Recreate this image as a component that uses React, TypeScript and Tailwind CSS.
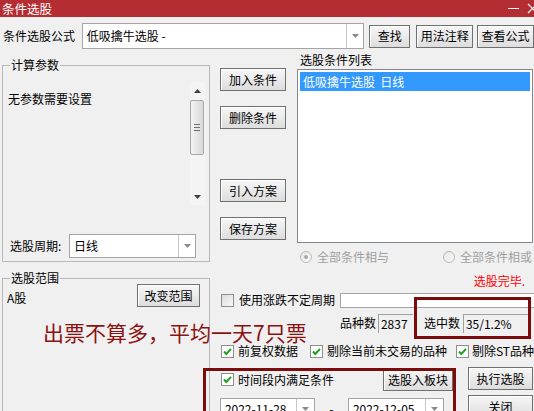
import React from 'react';

const Btn = ({ label, className = '' }: { label: string; className?: string }) => (
  <button
    className={`flex items-center justify-center border border-[#707070] bg-gradient-to-b from-[#f7f7f7] to-[#dddddd] text-[12px] leading-none text-black shadow-[inset_1px_1px_0_#ffffff] ${className}`}
  >
    {label}
  </button>
);

const Combo = ({ value, className = '', arrow = 'w-[17px]' }: { value: string; className?: string; arrow?: string }) => (
  <div className={`flex border border-[#a5a5a5] bg-white ${className}`}>
    <div className="flex flex-1 items-center overflow-hidden whitespace-nowrap pl-[4px]">{value}</div>
    <div className={`flex items-center justify-center border-l border-[#c8c8c8] ${arrow}`}>
      <svg width="7" height="4" viewBox="0 0 7 4">
        <path d="M0 0h7L3.5 4z" fill="#8a8a8a" />
      </svg>
    </div>
  </div>
);

const Check = ({ checked = true }: { checked?: boolean }) => (
  <div
    className={`flex h-[13px] w-[13px] shrink-0 items-center justify-center border border-[#8f8f8f] ${
      checked ? 'bg-white' : 'bg-gradient-to-br from-[#dcdcdc] to-[#f8f8f8]'
    }`}
  >
    {checked && (
      <svg width="11" height="11" viewBox="0 0 11 11">
        <path d="M2 5.5l2.3 2.5L9 2.8" stroke="#20a020" strokeWidth="2" fill="none" />
      </svg>
    )}
  </div>
);

const Radio = ({ on = false }: { on?: boolean }) => (
  <div className="flex h-[12px] w-[12px] shrink-0 items-center justify-center rounded-full border border-[#b9b9b9] bg-gradient-to-br from-[#e6e6e6] to-[#fafafa]">
    {on && <div className="h-[4px] w-[4px] rounded-full bg-[#a8a8a8]" />}
  </div>
);

const Legend = ({ text }: { text: string }) => (
  <div className="absolute left-[7px] top-[-8px] bg-[#f0f0f0] px-[1px] leading-[14px]">{text}</div>
);

const ScrollBar = () => (
  <div className="mr-[4px] mt-[16px] flex h-[123px] w-[15px] flex-col items-center bg-[#f4f4f4]">
    <div className="flex h-[18px] items-center justify-center">
      <svg width="7" height="4" viewBox="0 0 7 4">
        <path d="M0 4h7L3.5 0z" fill="#404040" />
      </svg>
    </div>
    <div className="flex h-[55px] w-[14px] flex-col items-center justify-center gap-[2px] rounded-[2px] border border-[#a8a8a8] bg-gradient-to-r from-[#f4f4f4] to-[#d8d8d8]">
      <div className="h-px w-[6px] bg-[#707070]" />
      <div className="h-px w-[6px] bg-[#707070]" />
      <div className="h-px w-[6px] bg-[#707070]" />
    </div>
    <div className="flex-1" />
    <div className="flex h-[16px] items-center justify-center">
      <svg width="7" height="4" viewBox="0 0 7 4">
        <path d="M0 0h7L3.5 4z" fill="#404040" />
      </svg>
    </div>
  </div>
);

const App = () => {
  return (
    <div className="relative flex h-[411px] w-[534px] flex-col overflow-hidden bg-[#f0f0f0] font-['Noto_Sans_CJK_SC','Liberation_Sans',sans-serif] text-[12px] leading-[14px] text-black">
      {/* title bar */}
      <div className="flex h-[17px] shrink-0 items-center bg-[#b42d33] pl-[2px] text-[12.5px] text-white">
        <span>条件选股</span>
        <div className="ml-auto flex items-center gap-[8px]">
          <div className="h-px w-[11px] bg-white" />
          <svg width="11" height="11" viewBox="0 0 11 11" className="mr-[-4px]">
            <path d="M1 1l9 9M10 1l-9 9" stroke="#fff" strokeWidth="1.2" />
          </svg>
        </div>
      </div>

      {/* formula row */}
      <div className="mt-[6px] flex h-[26px] shrink-0 items-center pl-[3px]">
        <div className="w-[79px]">条件选股公式</div>
        <Combo value="低吸擒牛选股 -" className="h-[26px] w-[283px]" />
        <Btn label="查找" className="ml-[5px] h-[23px] w-[41px]" />
        <Btn label="用法注释" className="ml-[6px] h-[23px] w-[57px]" />
        <Btn label="查看公式" className="ml-[4px] h-[23px] w-[57px]" />
      </div>

      <div className="flex flex-1">
        {/* left column */}
        <div className="ml-[2px] flex w-[208px] flex-col">
          <div className="relative mt-[16px] flex h-[197px] flex-col border border-[#b9b9b9]">
            <Legend text="计算参数" />
            <div className="flex flex-1">
              <div className="flex-1 pl-[5px] pt-[26px]">无参数需要设置</div>
              <ScrollBar />
            </div>
            <div className="mb-[3px] flex h-[24px] items-center">
              <div className="w-[66px] pl-[7px]">选股周期:</div>
              <Combo value="日线" className="h-[24px] w-[127px]" />
            </div>
          </div>
          <div className="relative mt-[16px] flex-1 border border-b-0 border-[#b9b9b9]">
            <Legend text="选股范围" />
            <div className="mt-[5px] flex h-[23px] items-center">
              <span className="pl-[4px] pt-[4px]">A股</span>
              <Btn label="改变范围" className="ml-auto mr-[9px] h-[23px] w-[63px]" />
            </div>
          </div>
        </div>

        {/* right region */}
        <div className="flex flex-1 flex-col">
          <div className="flex h-[194px]">
            <div className="ml-[10px] flex w-[66px] flex-col">
              <Btn label="加入条件" className="mt-[19px] h-[23px] w-[66px]" />
              <Btn label="删除条件" className="mt-[15px] h-[23px] w-[66px]" />
              <Btn label="引入方案" className="mt-[50px] h-[23px] w-[66px]" />
              <Btn label="保存方案" className="mt-[15px] h-[23px] w-[66px]" />
            </div>
            <div className="ml-[11px] flex w-[236px] flex-col">
              <div className="mt-[4px] h-[14px] pl-[3px]">选股条件列表</div>
              <div className="mt-[2px] flex-1 border border-[#828790] bg-white p-[2px]">
                <div className="flex h-[19px] items-center bg-[#3399ff] pl-[3px] text-white">低吸擒牛选股&nbsp;&nbsp;日线</div>
              </div>
            </div>
          </div>

          <div className="mt-[7px] flex h-[14px] items-center text-[#a0a0a0]">
            <div className="ml-[90px] flex w-[143px] items-center">
              <Radio on />
              <span className="ml-[5px]">全部条件相与</span>
            </div>
            <div className="flex items-center whitespace-nowrap">
              <Radio />
              <span className="ml-[5px]">全部条件相或</span>
            </div>
          </div>

          <div className="mt-[10px] h-[14px] pr-[9px] text-right text-[#ff0000]">选股完毕.</div>

          <div className="mt-[4px] flex h-[16px] items-center">
            <div className="ml-[11px]">
              <Check checked={false} />
            </div>
            <span className="ml-[5px] w-[101px]">使用涨跌不定周期</span>
            <div className="h-[15px] flex-1 border border-r-0 border-[#a5a5a5] bg-white" />
          </div>

          <div className="mt-[5px] flex h-[20px] items-center">
            <span className="ml-[130px]">品种数</span>
            <div className="ml-[2px] flex h-[19px] w-[35px] items-center border-l border-t border-[#a0a0a0] pl-[2px]">2837</div>
            <span className="ml-[11px]">选中数</span>
            <div className="ml-[3px] flex h-[19px] w-[67px] items-center border-l border-t border-[#a0a0a0] pl-[2px]">35/1.2%</div>
          </div>

          <div className="mt-[10px] flex h-[16px] items-center whitespace-nowrap">
            <div className="ml-[11px]">
              <Check />
            </div>
            <span className="ml-[4px]">前复权数据</span>
            <div className="ml-[12px]">
              <Check />
            </div>
            <span className="ml-[4px]">剔除当前未交易的品种</span>
            <div className="ml-[9px]">
              <Check />
            </div>
            <span className="ml-[3px]">剔除ST品种</span>
          </div>

          <div className="mt-[8px] flex flex-1">
            <div className="flex w-[248px] flex-col">
              <div className="mt-[1px] flex h-[23px] items-center">
                <div className="ml-[11px]">
                  <Check />
                </div>
                <span className="ml-[4px]">时间段内满足条件</span>
                <Btn label="选股入板块" className="ml-auto mr-[5px] h-[22px] w-[70px]" />
              </div>
              <div className="mt-[7px] flex items-center">
                <Combo value="2022-11-28" className="ml-[10px] h-[22px] w-[95px]" arrow="w-[18px]" />
                <span className="w-[33px] text-center">-</span>
                <Combo value="2022-12-05" className="h-[22px] w-[96px]" arrow="w-[18px]" />
              </div>
            </div>
            <div className="ml-[10px] flex w-[65px] flex-col">
              <Btn label="执行选股" className="h-[23px] w-[65px]" />
              <Btn label="关闭" className="mt-[5px] h-[23px] w-[65px]" />
            </div>
          </div>
        </div>
      </div>

      {/* annotations drawn over the dialog */}
      <div className="absolute left-[414px] top-[297px] h-[42px] w-[117px] border-[3px] border-[#7a0c0c]" />
      <div className="absolute left-[203px] top-[368px] h-[60px] w-[253px] border-[3px] border-[#7a0c0c]" />
      <div className="absolute left-[43px] top-[322px] whitespace-nowrap text-[21px] leading-[20px] text-[#8c1212]">
        出票不算多，平均一天7只票
      </div>
    </div>
  );
};

export default App;
